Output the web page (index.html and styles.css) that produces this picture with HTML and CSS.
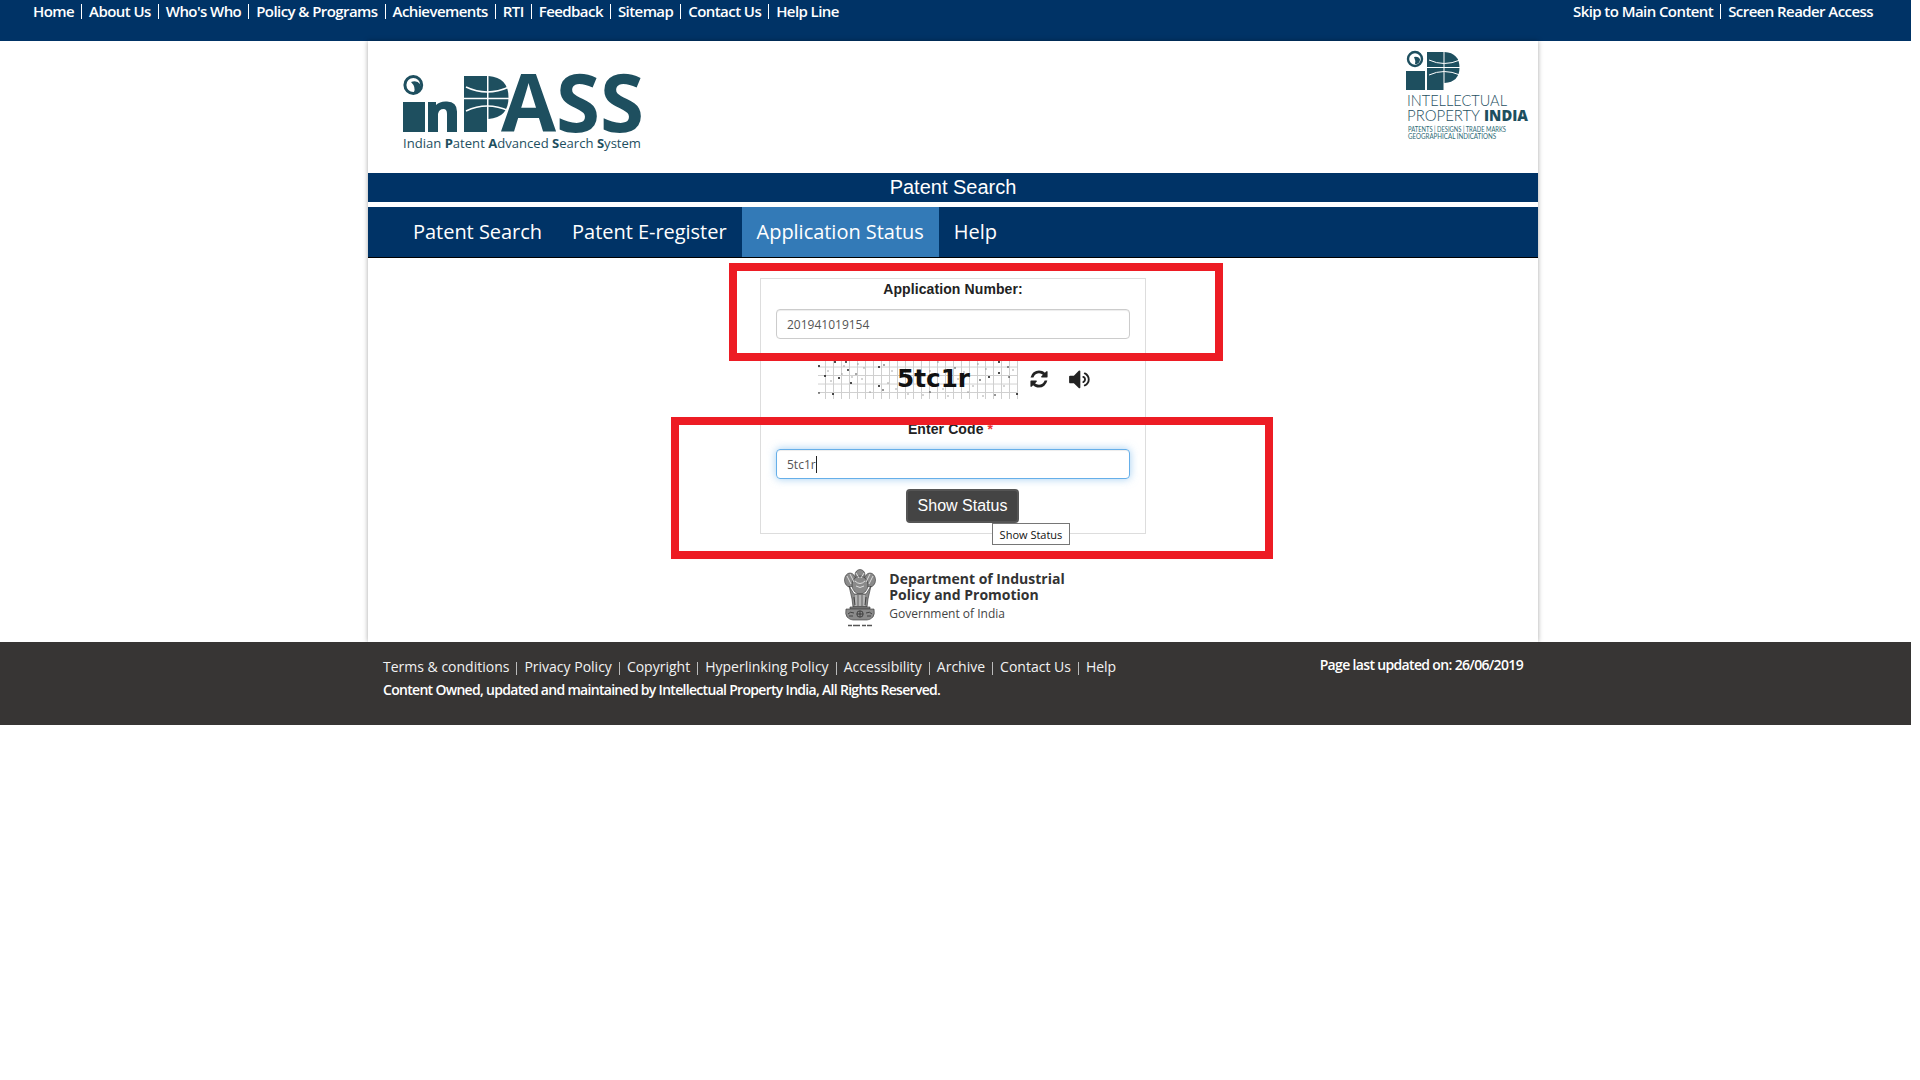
FILE: index.html
```html
<!DOCTYPE html>
<html lang="en">
<head>
  <meta charset="utf-8" />
  <title>inPASS - Application Status</title>
  <link rel="stylesheet" href="styles.css">
</head>
<body>
  <div class="topbar">
    <ul class="toplinks">
      <li><a href="#">Home</a></li>
      <li><a href="#">About Us</a></li>
      <li><a href="#">Who's Who</a></li>
      <li><a href="#">Policy &amp; Programs</a></li>
      <li><a href="#">Achievements</a></li>
      <li><a href="#">RTI</a></li>
      <li><a href="#">Feedback</a></li>
      <li><a href="#">Sitemap</a></li>
      <li><a href="#">Contact Us</a></li>
      <li><a href="#">Help Line</a></li>
    </ul>
    <ul class="toplinks">
      <li><a href="#">Skip to Main Content</a></li>
      <li><a href="#">Screen Reader Access</a></li>
    </ul>
  </div>

  <div class="wrapper">
    <div class="brand">
      <svg class="logo-inpass" viewBox="0 0 250 90" width="250" height="90">
        <circle cx="13.300" cy="15" r="8.400" fill="none" stroke="#1e4f5f" stroke-width="3"/>
        <path d="M11 12q6-2 9 2 1 6-3 8h-3q2-5-3-10z" fill="#1e4f5f"/>
        <path d="M3 32h22v30H3z" fill="#1e4f5f"/>
        <path d="M28 32h8v3q4-4 11-3.500 10 .5 10 10V62H47V44q0-5-3.500-5-4.500 0-5.500 5v18H28z" fill="#1e4f5f"/>
        <path d="M64 6h23v56H64zM88.500 6q20 1.500 20 21.500t-20 21.500z" fill="#1e4f5f"/>
        <path d="M66 17q21 10 43 0M66 41q21-10 43 0" fill="none" stroke="#fff" stroke-width="1.500"/>
        <path d="M64 28.500h45" stroke="#fff" stroke-width="1.500"/>
        <text class="logo-ass" x="101" y="62" textLength="143" lengthAdjust="spacingAndGlyphs">ASS</text>
        <text class="logo-sub" x="3" y="78" textLength="238" lengthAdjust="spacingAndGlyphs">Indian <tspan font-weight="700">P</tspan>atent <tspan font-weight="700">A</tspan>dvanced <tspan font-weight="700">S</tspan>earch <tspan font-weight="700">S</tspan>ystem</text>
      </svg>
      <svg class="logo-ip" viewBox="0 0 126 96" width="126" height="96">
        <circle cx="9" cy="8" r="7" fill="none" stroke="#1e4f5f" stroke-width="2.400"/>
        <path d="M8 6q4-1 6 2 0 4-3 5H9q1-3-1-7z" fill="#1e4f5f"/>
        <path d="M0 20h19v19H0z" fill="#1e4f5f"/>
        <path d="M21 1h16.500v38H21zM38.500 1q15 1 15 15.500t-15 15.500z" fill="#1e4f5f"/>
        <path d="M23 9q15 7 31 0M23 24q15-7 31 0" fill="none" stroke="#fff" stroke-width="1"/>
        <path d="M21 16.500h33" stroke="#fff" stroke-width="1"/>
        <text class="ip-line" x="1" y="55" textLength="100" lengthAdjust="spacingAndGlyphs">INTELLECTUAL</text>
        <text class="ip-line" x="1" y="70" textLength="73" lengthAdjust="spacingAndGlyphs">PROPERTY</text>
        <text class="ip-bold" x="78" y="70" textLength="44" lengthAdjust="spacingAndGlyphs">INDIA</text>
        <text class="ip-small" x="2" y="81" textLength="98" lengthAdjust="spacingAndGlyphs">PATENTS | DESIGNS | TRADE MARKS</text>
        <text class="ip-small" x="2" y="88" textLength="88" lengthAdjust="spacingAndGlyphs">GEOGRAPHICAL INDICATIONS</text>
      </svg>
    </div>

    <div class="title-bar">Patent Search</div>

    <ul class="mainnav">
      <li><a href="#">Patent Search</a></li>
      <li><a href="#">Patent E-register</a></li>
      <li><a href="#" class="active">Application Status</a></li>
      <li><a href="#">Help</a></li>
    </ul>

    <div class="content">
      <div class="panel">
        <div class="label">Application Number:</div>
        <div class="field">201941019154</div>
        <div class="captcha-row">
          <svg class="captcha" viewBox="0 0 200 40" width="200" height="40">
            <defs>
              <pattern id="grid" width="8" height="8.5" patternUnits="userSpaceOnUse">
                <path d="M7.500 0v8.500M0 8h8" fill="none" stroke="#cfcfcf" stroke-width="1"/>
              </pattern>
            </defs>
            <rect width="200" height="40" fill="url(#grid)"/>
            <g fill="#111">
              <circle cx="1" cy="7" r="1"/><circle cx="17" cy="3" r="1"/><circle cx="28" cy="3" r=".9"/>
              <circle cx="7" cy="17" r="1"/><circle cx="21" cy="19" r="1"/><circle cx="30" cy="11" r=".9"/>
              <circle cx="33" cy="24" r="1"/><circle cx="15" cy="35" r="1"/><circle cx="61" cy="8" r="1"/>
              <circle cx="61" cy="27" r="1"/><circle cx="65" cy="31" r=".8"/><circle cx="1" cy="34" r=".8"/>
              <circle cx="181" cy="3" r="1"/><circle cx="181" cy="14" r="1"/><circle cx="171" cy="18" r="1"/>
              <circle cx="191" cy="18" r=".8"/><circle cx="177" cy="36" r=".8"/><circle cx="199" cy="35" r="1"/>
              <circle cx="190" cy="8" r=".8"/><circle cx="137" cy="9" r=".7"/><circle cx="162" cy="21" r=".8"/>
              <circle cx="38" cy="15" r=".7"/><circle cx="66" cy="6" r=".7"/><circle cx="112" cy="33" r=".7"/>
            </g>
            <g fill="#888">
              <circle cx="10" cy="12" r=".7"/><circle cx="24" cy="15" r=".7"/><circle cx="40" cy="5" r=".7"/>
              <circle cx="44" cy="20" r=".7"/><circle cx="78" cy="30" r=".7"/><circle cx="90" cy="35" r=".7"/>
              <circle cx="105" cy="36" r=".7"/><circle cx="125" cy="30" r=".7"/><circle cx="150" cy="33" r=".7"/>
              <circle cx="160" cy="5" r=".7"/><circle cx="165" cy="37" r=".7"/><circle cx="195" cy="11" r=".7"/>
              <circle cx="120" cy="3" r=".7"/><circle cx="112" cy="12" r=".7"/><circle cx="52" cy="33" r=".7"/>
              <circle cx="13" cy="22" r=".7"/><circle cx="26" cy="7" r=".7"/><circle cx="34" cy="18" r=".7"/>
              <circle cx="46" cy="9" r=".7"/><circle cx="70" cy="24" r=".7"/><circle cx="74" cy="12" r=".7"/>
              <circle cx="140" cy="20" r=".7"/><circle cx="146" cy="13" r=".7"/><circle cx="155" cy="27" r=".7"/>
              <circle cx="168" cy="10" r=".7"/><circle cx="186" cy="27" r=".7"/><circle cx="130" cy="37" r=".7"/>
            </g>
            <text class="captcha-text" x="79" y="28" textLength="73" lengthAdjust="spacingAndGlyphs">5tc1r</text>
          </svg>
          <svg class="icon" viewBox="0 0 1792 1792" width="20" height="20"><path d="M1639 1056q0 5-1 7-64 268-268 434.5t-478 166.5q-146 0-282.5-55t-243.5-157l-129 129q-19 19-45 19t-45-19-19-45v-448q0-26 19-45t45-19h448q26 0 45 19t19 45-19 45l-137 137q71 66 161 102t187 36q134 0 250-65t186-179q11-17 53-117 8-23 30-23h192q13 0 22.5 9.5t9.5 22.5zm25-800v448q0 26-19 45t-45 19h-448q-26 0-45-19t-19-45 19-45l138-138q-148-137-349-137-134 0-250 65t-186 179q-11 17-53 117-8 23-30 23h-199q-13 0-22.5-9.5t-9.5-22.5v-7q65-268 270-434.5t480-166.5q146 0 284 55.5t245 156.5l130-129q19-19 45-19t45 19 19 45z"/></svg>
          <svg class="icon icon-sound" viewBox="60 250 1430 1300" width="21" height="19"><path d="M832 352v1088q0 26-19 45t-45 19-45-19l-333-333h-262q-26 0-45-19t-19-45v-384q0-26 19-45t45-19h262l333-333q19-19 45-19t45 19 19 45zm384 544q0 76-42.5 141.5t-112.5 93.5q-10 5-25 5-26 0-45-18.5t-19-45.5q0-21 12-35.5t29-25 34-23 29-36 12-56.5-12-56.5-29-36-34-23-29-25-12-35.5q0-27 19-45.5t45-18.5q15 0 25 5 70 27 112.5 93t42.5 142zm256 0q0 153-85 282.5t-225 188.5q-13 5-25 5-27 0-46-19t-19-45q0-39 39-59 56-29 76-44 74-54 115.5-135.5t41.5-173.5-41.5-173.5-115.5-135.5q-20-15-76-44-39-20-39-59 0-26 19-45t45-19q13 0 26 5 140 59 225 188.5t85 282.5z"/></svg>
        </div>
        <div class="label label-code">Enter Code <span class="req">*</span></div>
        <div class="field field-focus">5tc1r<span class="caret"></span></div>
        <div class="btn-row">
          <button class="btn">Show Status</button>
          <span class="tooltip">Show Status</span>
        </div>
        <div class="redbox redbox-a"></div>
        <div class="redbox redbox-b"></div>
      </div>

      <div class="dept">
        <svg class="emblem" viewBox="0 0 34 58" width="34" height="58">
          <g fill="#8a8a8a" stroke="#333" stroke-width=".6">
            <ellipse cx="17" cy="6" rx="5" ry="5.500"/>
            <ellipse cx="7" cy="11" rx="5.500" ry="7"/>
            <ellipse cx="27" cy="11" rx="5.500" ry="7"/>
            <ellipse cx="17" cy="16" rx="8" ry="9"/>
            <path d="M6 17l3 13 1 8h14l1-8 3-13-5 8H11z"/>
            <path d="M7 38h20v2H7z"/>
            <path d="M3 40h28q1 5-1 8-3 3-6 3H10q-3 0-6-3-2-3-1-8z"/>
          </g>
          <g fill="none" stroke="#fff" stroke-width=".7">
            <path d="M13 26v11M17 26v11M21 26v11"/>
            <path d="M4 7l4 8M30 7l-4 8M7 5l4 8M27 5l-4 8M13 4l3 5M21 4l-3 5M12 12q5 5 10 0M13 17q4 3 8 0"/>
          </g>
          <g fill="none" stroke="#222" stroke-width=".7">
            <circle cx="17" cy="45" r="3.200"/>
            <path d="M17 42v6M14 45h6M5 45q2-3 6-1M29 45q-2-3-6-1M6 47h4M24 47h4"/>
            <path d="M11 28l1 8M23 28l-1 8"/>
          </g>
          <path d="M5 56.500h24" stroke="#555" stroke-width="1.500" stroke-dasharray="4 1 7 2"/>
        </svg>
        <div>
          <div class="dept-name">Department of Industrial<br>Policy and Promotion</div>
          <div class="dept-gov">Government of India</div>
        </div>
      </div>
    </div>
  </div>

  <div class="footer">
    <div class="footer-inner">
      <div>
        <ul class="footlinks">
          <li><a href="#">Terms &amp; conditions</a></li>
          <li><a href="#">Privacy Policy</a></li>
          <li><a href="#">Copyright</a></li>
          <li><a href="#">Hyperlinking Policy</a></li>
          <li><a href="#">Accessibility</a></li>
          <li><a href="#">Archive</a></li>
          <li><a href="#">Contact Us</a></li>
          <li><a href="#">Help</a></li>
        </ul>
        <p class="owned">Content Owned, updated and maintained by Intellectual Property India, All Rights Reserved.</p>
      </div>
      <p class="updated">Page last updated on: 26/06/2019</p>
    </div>
  </div>
</body>
</html>
```

FILE: styles.css
```css
* {
  box-sizing: border-box;
}
body {
  margin: 0;
  width: 1911px;
  font-family: "Open Sans", sans-serif;
  background: #fff;
  color: #333;
}
ul {
  list-style: none;
  margin: 0;
  padding: 0;
}
a {
  color: inherit;
  text-decoration: none;
}
svg {
  overflow: visible;
}

.topbar {
  height: 41px;
  background: #003366;
  color: #fff;
  display: flex;
  justify-content: space-between;
  padding: 4px 31px 0 26px;
}
.toplinks {
  display: flex;
  height: 15px;
  font-size: 15px;
  font-weight: 600;
  line-height: 15px;
  letter-spacing: -0.57px;
}
.toplinks li {
  padding: 0 7px;
  border-right: 1px solid #fff;
}
.toplinks li:last-child {
  border-right: none;
}

.wrapper {
  width: 1170px;
  margin-left: 368px;
  height: 601px;
  background: #fff;
  box-shadow: 0 0 5px rgba(0,0,0,0.35);
}
.brand {
  height: 132px;
  display: flex;
  justify-content: space-between;
  padding: 10px 6px 0 32px;
}
.logo-inpass {
  margin-top: 19px;
}
.logo-ass {
  font-family: "Open Sans", sans-serif;
  font-weight: 700;
  font-size: 80px;
  fill: #1e4f5f;
}
.logo-sub {
  font-family: "Open Sans", sans-serif;
  font-size: 13px;
  fill: #1e4f5f;
}
.ip-line {
  font-family: "Lato", sans-serif;
  font-weight: 300;
  font-size: 16px;
  fill: #1e4f5f;
}
.ip-bold {
  font-family: "Open Sans", sans-serif;
  font-weight: 800;
  font-size: 15px;
  fill: #1e4f5f;
}
.ip-small {
  font-family: "Lato", sans-serif;
  font-size: 8px;
  fill: #2c6a75;
}

.title-bar {
  height: 29px;
  background: #003366;
  color: #fff;
  font-family: "Liberation Sans", sans-serif;
  font-size: 20px;
  line-height: 29px;
  text-align: center;
}

.mainnav {
  height: 51px;
  margin-top: 5px;
  background: #003366;
  border-bottom: 1px solid #000;
  display: flex;
  padding-left: 30px;
  font-size: 20px;
  letter-spacing: -0.03px;
  color: #fff;
}
.mainnav a {
  display: block;
  height: 50px;
  padding: 0 15px;
  line-height: 50px;
}
.mainnav a.active {
  background: #337ab7;
}

.content {
  display: flex;
  flex-direction: column;
  align-items: center;
}
.panel {
  position: relative;
  width: 386px;
  height: 256px;
  margin-top: 20px;
  border: 1px solid #ddd;
  padding: 0 15px;
}
.label {
  font-family: "Liberation Sans", sans-serif;
  font-size: 14px;
  font-weight: 700;
  line-height: 20px;
  letter-spacing: 0.1px;
  text-align: center;
  color: #222;
}
.field {
  height: 30px;
  margin-top: 10px;
  border: 1px solid #ccc;
  border-radius: 4px;
  padding: 0 10px;
  font-size: 12px;
  line-height: 29px;
  color: #555;
  box-shadow: inset 0 1px 1px rgba(0,0,0,0.075);
}
.field-focus {
  border-color: #66afe9;
  box-shadow: inset 0 1px 1px rgba(0,0,0,0.075), 0 0 8px rgba(102,175,233,0.6);
}
.caret {
  display: inline-block;
  width: 1px;
  height: 17px;
  background: #222;
  vertical-align: -4px;
}
.captcha-row {
  display: flex;
  align-items: center;
  height: 40px;
  margin-top: 20px;
  margin-left: 42px;
}
.captcha-text {
  font-family: "DejaVu Sans", sans-serif;
  font-weight: 700;
  font-size: 24px;
  fill: #111;
}
.icon {
  margin-left: 11px;
  fill: #222;
}
.icon-sound {
  margin-left: 20px;
}
.label-code {
  margin-top: 20px;
  margin-left: -5px;
}
.req {
  color: #e33;
}
.btn-row {
  position: relative;
  display: flex;
  justify-content: center;
  padding-left: 19px;
  margin-top: 10px;
}
.btn {
  width: 113px;
  height: 34px;
  background: #444;
  color: #fff;
  border: 2px solid #555;
  border-radius: 4px;
  font-family: "Liberation Sans", sans-serif;
  font-size: 16px;
  padding: 0;
}
.tooltip {
  position: absolute;
  left: 216px;
  top: 34px;
  width: 78px;
  height: 22px;
  background: #fff;
  border: 1px solid #767676;
  font-size: 11px;
  line-height: 21px;
  text-align: center;
  color: #111;
  z-index: 2;
}
.redbox {
  position: absolute;
  border: 8px solid #ed1c24;
  pointer-events: none;
}
.redbox-a {
  left: -32px;
  top: -16px;
  width: 494px;
  height: 98px;
}
.redbox-b {
  left: -90px;
  top: 138px;
  width: 602px;
  height: 142px;
}

.dept {
  display: flex;
  gap: 12px;
  margin-top: 35px;
  margin-left: 2px;
}
.dept-name {
  font-size: 14px;
  font-weight: 700;
  line-height: 16px;
  color: #333;
  margin-top: 2px;
}
.dept-gov {
  font-size: 12px;
  line-height: 16px;
  margin-top: 3px;
  color: #444;
}

.footer {
  height: 83px;
  background: #373534;
  color: #fff;
}
.footer-inner {
  width: 1170px;
  margin-left: 368px;
  padding: 15px 15px 0;
  display: flex;
  justify-content: space-between;
}
.footlinks {
  display: flex;
  font-size: 14px;
  line-height: 20px;
  color: #f2f2f2;
}
.footlinks li {
  padding: 0 8px 0 0;
  margin-right: 7px;
  position: relative;
}
.footlinks li::after {
  content: "";
  position: absolute;
  right: 0;
  top: 5px;
  height: 13px;
  border-right: 1px solid #bbb;
}
.footlinks li:last-child::after {
  display: none;
}
.owned {
  margin: 3px 0 0;
  font-size: 14px;
  font-weight: 600;
  line-height: 20px;
  letter-spacing: -0.7px;
}
.updated {
  margin: -2px 0 0;
  font-size: 14px;
  font-weight: 600;
  line-height: 20px;
  letter-spacing: -0.66px;
}
```
